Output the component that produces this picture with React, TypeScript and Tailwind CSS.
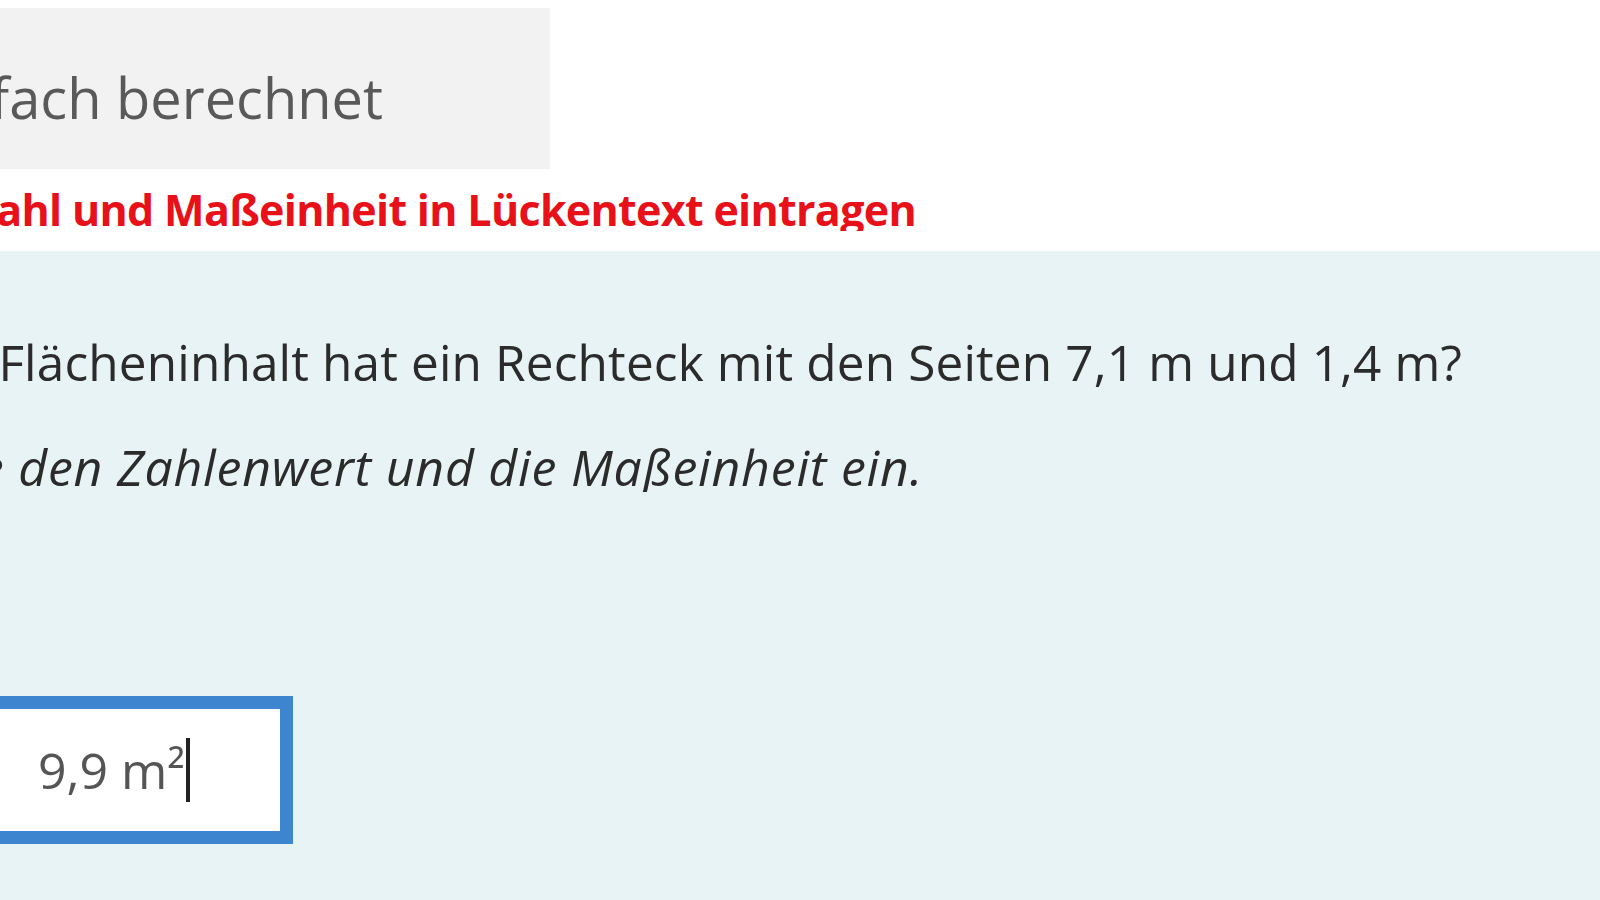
export default function App() {
  const font = { fontFamily: '"Open Sans", "Noto Sans", sans-serif' };
  return (
    <div className="w-[1600px] h-[900px] overflow-hidden bg-white flex flex-col" style={font}>
      <div className="h-[251px] shrink-0 flex flex-col">
        <div className="mt-[8px] w-[550px] h-[161px] bg-[#f2f2f2] overflow-hidden flex justify-end items-start pr-[167px] pt-[61px]">
          <span className="whitespace-nowrap text-[56px] leading-none text-[#595959]">Einfach berechnet</span>
        </div>
        <div className="w-[916px] overflow-hidden flex justify-end">
          <div className="mt-[19px] whitespace-nowrap text-[43px] leading-none font-bold text-[#e8111a] tracking-[-0.7px]">Zahl und Maßeinheit in Lückentext eintragen</div>
        </div>
      </div>
      <div className="flex-1 bg-[#e7f3f4] overflow-hidden flex flex-col">
        <div className="w-[1462px] flex justify-end overflow-hidden">
          <div className="mt-[87px] whitespace-nowrap text-[49.5px] leading-none text-[#2b2b2b] tracking-[0.15px]">Welchen Flächeninhalt hat ein Rechteck mit den Seiten 7,1 m und 1,4 m?</div>
        </div>
        <div className="w-[923px] flex justify-end overflow-hidden">
          <div className="mt-[54px] whitespace-nowrap text-[50px] leading-none italic text-[#2b2b2b] tracking-[0.8px]">Trage den Zahlenwert und die Maßeinheit ein.</div>
        </div>
        <div className="mt-[204px] ml-[-20px] w-[313px] h-[148px] border-[13px] border-[#3d86cf] bg-white flex items-center">
          <span className="ml-[45px] text-[50px] leading-none text-[#555]">9,9 m²</span>
          <span className="ml-[1px] w-[4px] h-[64px] bg-[#222]" />
        </div>
      </div>
    </div>
  );
}
